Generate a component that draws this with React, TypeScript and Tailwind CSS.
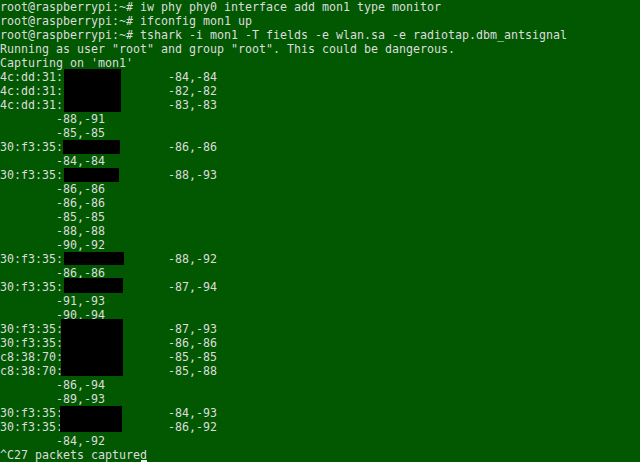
import React from 'react';

const lines: string[] = [
  'root@raspberrypi:~# iw phy phy0 interface add mon1 type monitor',
  'root@raspberrypi:~# ifconfig mon1 up',
  'root@raspberrypi:~# tshark -i mon1 -T fields -e wlan.sa -e radiotap.dbm_antsignal',
  'Running as user "root" and group "root". This could be dangerous.',
  "Capturing on 'mon1'",
  '4c:dd:31:               -84,-84',
  '4c:dd:31:               -82,-82',
  '4c:dd:31:               -83,-83',
  '        -88,-91',
  '        -85,-85',
  '30:f3:35:               -86,-86',
  '        -84,-84',
  '30:f3:35:               -88,-93',
  '        -86,-86',
  '        -86,-86',
  '        -85,-85',
  '        -88,-88',
  '        -90,-92',
  '30:f3:35:               -88,-92',
  '        -86,-86',
  '30:f3:35:               -87,-94',
  '        -91,-93',
  '        -90,-94',
  '30:f3:35:               -87,-93',
  '30:f3:35:               -86,-86',
  'c8:38:70:               -85,-85',
  'c8:38:70:               -85,-88',
  '        -86,-94',
  '        -89,-93',
  '30:f3:35:               -84,-93',
  '30:f3:35:               -86,-92',
  '        -84,-92',
  '^C27 packets captured',
];

// redaction boxes drawn over the MAC addresses
const boxes = [
  { k: 'a', cls: 'left-[64px] top-[69px] w-[57px] h-[43px]' },
  { k: 'b', cls: 'left-[63px] top-[140px] w-[57px] h-[14px]' },
  { k: 'c', cls: 'left-[64px] top-[168px] w-[55px] h-[14px]' },
  { k: 'd', cls: 'left-[64px] top-[252px] w-[60px] h-[13px]' },
  { k: 'e', cls: 'left-[64px] top-[278px] w-[59px] h-[15px]' },
  { k: 'f', cls: 'left-[61px] top-[319px] w-[62px] h-[57px]' },
  { k: 'g', cls: 'left-[60px] top-[406px] w-[62px] h-[26px]' },
];

export default function App() {
  return (
    <div className="relative w-[640px] h-[462px] overflow-hidden bg-[#015801] text-[#dcdcdc]">
      <div className="flex flex-col font-['DejaVu_Sans_Mono',monospace] text-[11.63px] leading-[14px] whitespace-pre">
        {lines.map((l, i) => (
          <div key={i} className="h-[14px]">
            {l}
          </div>
        ))}
      </div>

      {boxes.map((b) => (
        <div key={b.k} className={`absolute bg-black ${b.cls}`} />
      ))}

      {/* cursor */}
      <div className="absolute left-[141px] top-[460px] w-[6px] h-[2px] bg-[#f0f0f0]" />
    </div>
  );
}
